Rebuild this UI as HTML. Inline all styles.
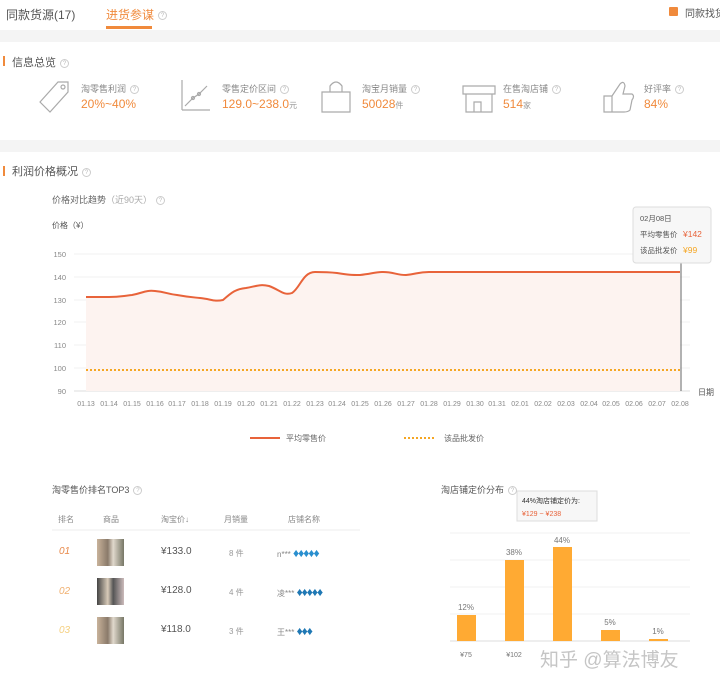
<!DOCTYPE html>
<html><head><meta charset="utf-8"><style>
*{margin:0;padding:0;box-sizing:border-box}
body{width:720px;height:688px;background:#f4f4f4;font-family:"Liberation Sans","Noto Sans CJK SC",sans-serif;position:relative;overflow:hidden;color:#666}
.a{position:absolute;white-space:nowrap}
.q{display:inline-block;width:9px;height:9px;border:1px solid #ccc;border-radius:50%;font-size:6px;color:#bbb;text-align:center;line-height:8px;vertical-align:middle;margin-left:4px}
.d{font-size:12px;letter-spacing:-1px}
</style></head><body>
<div class="a" style="left:0;top:0;width:720px;height:30px;background:#fff"></div>
<div class="a" style="left:6px;top:6px;font-size:12px;color:#555">同款货源(17)</div>
<div class="a" style="left:106px;top:6px;font-size:12px;color:#f08a3c">进货参谋<span class="q">?</span></div>
<div class="a" style="left:106px;top:26px;width:46px;height:3px;background:#f08a3c"></div>
<div class="a" style="left:669px;top:7px;width:9px;height:9px;background:#f08a3c;border-radius:1px"></div>
<div class="a" style="left:685px;top:5px;font-size:10px;color:#555">同款找货</div>

<div class="a" style="left:0;top:42px;width:720px;height:98px;background:#fff"></div>
<div class="a" style="left:3px;top:56px;width:2px;height:10px;background:#f08a3c"></div>
<div class="a" style="left:12px;top:54px;font-size:11px;color:#555">信息总览<span class="q">?</span></div>
<svg class="a" style="left:0;top:70px" width="720" height="60" fill="none" stroke="#aaa" stroke-width="1.2">
<path d="M40 32 L58 12 L68 12 L68 22 L50 42 Z"/><circle cx="63" cy="17" r="2"/>
<path d="M182 40 V10 M182 40 H210 M185 36 L193 28 L199 24 L207 16"/><circle cx="193" cy="28" r="1.5"/><circle cx="199" cy="24" r="1.5"/>
<path d="M322 22 H350 V42 H322 Z M330 22 V16 Q336 8 342 16 V22"/>
<path d="M463 16 H495 V24 H463 Z M466 24 V42 H492 V24 M474 42 V32 H481 V42"/>
<path d="M604 26 H612 V42 H604 Z M612 26 L620 14 Q624 10 625 16 L623 24 H632 Q635 26 632 30 L630 40 Q628 42 624 42 H612"/>
</svg>
<div class="a" style="left:81px;top:82px;font-size:9px;color:#888">淘零售利润<span class="q">?</span></div>
<div class="a" style="left:81px;top:97px;font-size:12px;color:#f08a3c">20%~40%</div>
<div class="a" style="left:222px;top:82px;font-size:9px;color:#888">零售定价区间<span class="q">?</span></div>
<div class="a" style="left:222px;top:97px;font-size:12px;color:#f08a3c">129.0~238.0<span style="font-size:8px;color:#999">元</span></div>
<div class="a" style="left:362px;top:82px;font-size:9px;color:#888">淘宝月销量<span class="q">?</span></div>
<div class="a" style="left:362px;top:97px;font-size:12px;color:#f08a3c">50028<span style="font-size:8px;color:#999">件</span></div>
<div class="a" style="left:503px;top:82px;font-size:9px;color:#888">在售淘店铺<span class="q">?</span></div>
<div class="a" style="left:503px;top:97px;font-size:12px;color:#f08a3c">514<span style="font-size:8px;color:#999">家</span></div>
<div class="a" style="left:644px;top:82px;font-size:9px;color:#888">好评率<span class="q">?</span></div>
<div class="a" style="left:644px;top:97px;font-size:12px;color:#f08a3c">84%</div>

<div class="a" style="left:0;top:152px;width:720px;height:536px;background:#fff"></div>
<div class="a" style="left:3px;top:166px;width:2px;height:10px;background:#f08a3c"></div>
<div class="a" style="left:12px;top:163px;font-size:11px;color:#555">利润价格概况<span class="q">?</span></div>
<div class="a" style="left:52px;top:193px;font-size:9px;color:#666">价格对比趋势<span style="color:#aaa">（近90天）</span><span class="q">?</span></div>
<div class="a" style="left:52px;top:220px;font-size:8px;color:#555">价格（¥）</div>

<svg class="a" style="left:0;top:0" width="720" height="688" font-family="Liberation Sans" font-size="7.5" fill="#888">
<g stroke="#f0f0f0"><line x1="74" x2="690" y1="254" y2="254"/><line x1="74" x2="690" y1="277" y2="277"/><line x1="74" x2="690" y1="300" y2="300"/><line x1="74" x2="690" y1="322" y2="322"/><line x1="74" x2="690" y1="345" y2="345"/><line x1="74" x2="690" y1="368" y2="368"/></g>
<line x1="74" x2="690" y1="391" y2="391" stroke="#ddd"/>
<g text-anchor="end"><text x="66" y="257">150</text><text x="66" y="280">140</text><text x="66" y="303">130</text><text x="66" y="325">120</text><text x="66" y="348">110</text><text x="66" y="371">100</text><text x="66" y="394">90</text></g>
<path d="M86 297 C97 297 98 297 109 297 C120 297 122 296 132 295 C143 293 145 290 155 291 C166 292 167 294 177 295 C188 297 190 297 200 298 C211 299 214 302 223 300 C232 292 236 289 246 288 C257 286 260 284 269 286 C280 290 284 296 292 293 C300 288 303 272 315 272 C326 272 328 272 337 273 C349 275 352 275 360 275 C371 274 375 272 383 272 C394 272 396 275 406 275 C417 274 418 272 429 272 L680 272 L680 391 L86 391 Z" fill="#fdf3f0" stroke="none"/>
<path d="M86 297 C97 297 98 297 109 297 C120 297 122 296 132 295 C143 293 145 290 155 291 C166 292 167 294 177 295 C188 297 190 297 200 298 C211 299 214 302 223 300 C232 292 236 289 246 288 C257 286 260 284 269 286 C280 290 284 296 292 293 C300 288 303 272 315 272 C326 272 328 272 337 273 C349 275 352 275 360 275 C371 274 375 272 383 272 C394 272 396 275 406 275 C417 274 418 272 429 272 L680 272" fill="none" stroke="#e8633a" stroke-width="2"/>
<line x1="86" x2="680" y1="370" y2="370" stroke="#f5a623" stroke-width="2" stroke-dasharray="2 2"/>
<line x1="681" x2="681" y1="262" y2="391" stroke="#666"/>
<text x="698" y="395" font-size="8" fill="#555">日期</text>
<g text-anchor="middle" font-size="7">
<text x="86" y="406">01.13</text><text x="109" y="406">01.14</text><text x="132" y="406">01.15</text><text x="155" y="406">01.16</text><text x="177" y="406">01.17</text><text x="200" y="406">01.18</text><text x="223" y="406">01.19</text><text x="246" y="406">01.20</text><text x="269" y="406">01.21</text><text x="292" y="406">01.22</text><text x="315" y="406">01.23</text><text x="337" y="406">01.24</text><text x="360" y="406">01.25</text><text x="383" y="406">01.26</text><text x="406" y="406">01.27</text><text x="429" y="406">01.28</text><text x="452" y="406">01.29</text><text x="475" y="406">01.30</text><text x="497" y="406">01.31</text><text x="520" y="406">02.01</text><text x="543" y="406">02.02</text><text x="566" y="406">02.03</text><text x="589" y="406">02.04</text><text x="611" y="406">02.05</text><text x="634" y="406">02.06</text><text x="657" y="406">02.07</text><text x="680" y="406">02.08</text></g>
<line x1="250" x2="280" y1="438" y2="438" stroke="#e8633a" stroke-width="2"/>
<text x="286" y="441" font-size="8" fill="#666">平均零售价</text>
<line x1="404" x2="436" y1="438" y2="438" stroke="#f5a623" stroke-width="2" stroke-dasharray="2 2"/>
<text x="444" y="441" font-size="8" fill="#666">该品批发价</text>
<rect x="633" y="207" width="78" height="56" rx="3" fill="#f7f7f7" stroke="#ddd"/>
<text x="640" y="221" font-size="7.5" fill="#555">02月08日</text>
<text x="640" y="237" font-size="7.5" fill="#555">平均零售价</text><text x="683" y="237" font-size="8.5" fill="#e8633a">¥142</text>
<text x="640" y="253" font-size="7.5" fill="#555">该品批发价</text><text x="683" y="253" font-size="8.5" fill="#f5a623">¥99</text>

<g stroke="#f2f2f2"><line x1="450" x2="690" y1="533" y2="533"/><line x1="450" x2="690" y1="560" y2="560"/><line x1="450" x2="690" y1="587" y2="587"/><line x1="450" x2="690" y1="614" y2="614"/></g>
<line x1="450" x2="690" y1="641" y2="641" stroke="#ddd"/>
<g fill="#ffaa33"><rect x="457" y="615" width="19" height="26"/><rect x="505" y="560" width="19" height="81"/><rect x="553" y="547" width="19" height="94"/><rect x="601" y="630" width="19" height="11"/><rect x="649" y="639" width="19" height="2"/></g>
<g text-anchor="middle" font-size="8" fill="#777"><text x="466" y="610">12%</text><text x="514" y="555">38%</text><text x="562" y="543">44%</text><text x="610" y="625">5%</text><text x="658" y="634">1%</text>
<text x="466" y="657" font-size="7">¥75</text><text x="514" y="657" font-size="7">¥102</text></g>
<rect x="517" y="491" width="80" height="30" fill="#f7f7f7" stroke="#ddd"/>
<text x="522" y="503" font-size="7" fill="#333">44%淘店铺定价为:</text>
<text x="522" y="516" font-size="7" fill="#e8633a">¥129 ~ ¥238</text>
<line x1="52" x2="360" y1="530" y2="530" stroke="#eee"/>
</svg>

<div class="a" style="left:52px;top:483px;font-size:9px;color:#555">淘零售价排名TOP3<span class="q">?</span></div>
<div class="a" style="left:441px;top:483px;font-size:9px;color:#555">淘店铺定价分布<span class="q">?</span></div>
<div class="a" style="left:58px;top:514px;font-size:8px;color:#888">排名</div>
<div class="a" style="left:103px;top:514px;font-size:8px;color:#888">商品</div>
<div class="a" style="left:161px;top:514px;font-size:8px;color:#888">淘宝价↓</div>
<div class="a" style="left:224px;top:514px;font-size:8px;color:#888">月销量</div>
<div class="a" style="left:288px;top:514px;font-size:8px;color:#888">店铺名称</div>

<div class="a" style="left:59px;top:546px;font-size:10px;font-style:italic;color:#e8894a">01</div>
<div class="a" style="left:59px;top:586px;font-size:10px;font-style:italic;color:#f0b070">02</div>
<div class="a" style="left:59px;top:625px;font-size:10px;font-style:italic;color:#f5d080">03</div>
<div class="a" style="left:97px;top:539px;width:27px;height:27px;background:linear-gradient(90deg,#c9b39b,#8a7a6a 40%,#e0d8cc 60%,#776)"></div>
<div class="a" style="left:97px;top:578px;width:27px;height:27px;background:linear-gradient(90deg,#444,#d8cab8 40%,#555 60%,#cbb)"></div>
<div class="a" style="left:97px;top:617px;width:27px;height:27px;background:linear-gradient(90deg,#c9b39b,#8a7a6a 40%,#e0d8cc 60%,#776)"></div>
<div class="a" style="left:161px;top:546px;font-size:10px;color:#555">¥133.0</div>
<div class="a" style="left:161px;top:585px;font-size:10px;color:#555">¥128.0</div>
<div class="a" style="left:161px;top:624px;font-size:10px;color:#555">¥118.0</div>
<div class="a" style="left:229px;top:548px;font-size:8px;color:#999">8 件</div>
<div class="a" style="left:229px;top:587px;font-size:8px;color:#999">4 件</div>
<div class="a" style="left:229px;top:626px;font-size:8px;color:#999">3 件</div>
<div class="a" style="left:277px;top:546px;font-size:8px;color:#888">n*** <span class="d" style="color:#2a8fcf">♦♦♦♦♦</span></div>
<div class="a" style="left:277px;top:585px;font-size:8px;color:#888">凌*** <span class="d" style="color:#1f78b4">♦♦♦♦♦</span></div>
<div class="a" style="left:277px;top:624px;font-size:8px;color:#888">王*** <span class="d" style="color:#1f78b4">♦♦♦</span></div>
<div class="a" style="left:540px;top:645px;font-size:19px;color:#bbb;opacity:.85">知乎 @算法博友</div>
</body></html>
